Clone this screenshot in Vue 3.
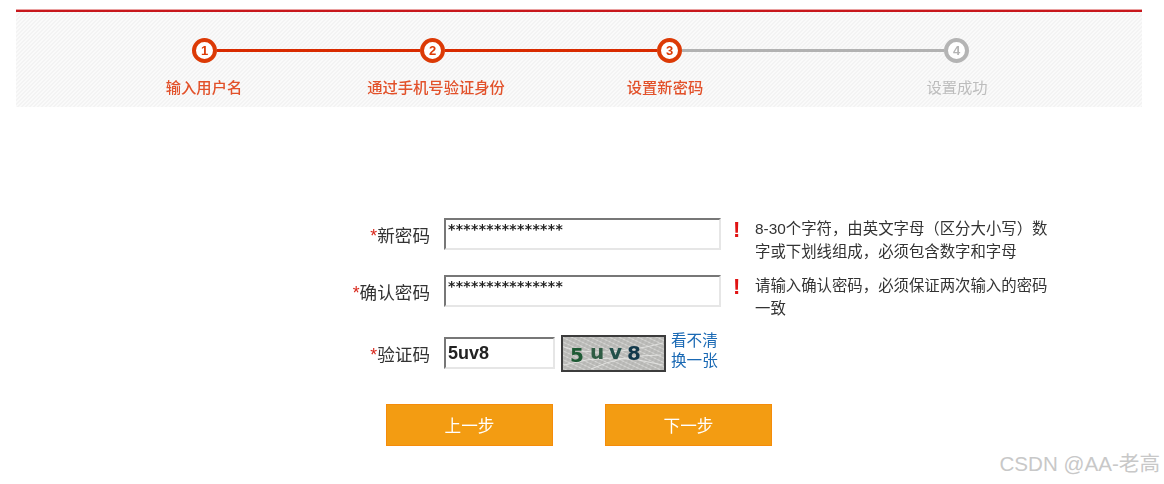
<script setup>
const steps = [
  { n: 1, label: '输入用户名', on: true },
  { n: 2, label: '通过手机号验证身份', on: true },
  { n: 3, label: '设置新密码', on: true },
  { n: 4, label: '设置成功', on: false },
]
const masked = '***************'
</script>

<template>
  <div class="page">
    <div class="main">
      <section class="band">
        <div class="track">
          <template v-for="(s, i) in steps" :key="s.n">
            <span class="dot" :class="{ off: !s.on }">{{ s.n }}</span>
            <span v-if="i < 3" class="line" :class="['l' + i, { off: !steps[i + 1].on }]"></span>
          </template>
        </div>
        <div class="labels">
          <span v-for="s in steps" :key="s.n" :class="{ off: !s.on }">{{ s.label }}</span>
        </div>
      </section>

      <form class="form" @submit.prevent>
        <div class="row r1">
          <label class="name"><i>*</i>新密码</label>
          <input class="field pwd" readonly :value="masked" />
          <b class="bang">!</b>
          <p class="hint">8-30个字符，由英文字母（区分大小写）数字或下划线组成，必须包含数字和字母</p>
        </div>
        <div class="row r2">
          <label class="name"><i>*</i>确认密码</label>
          <input class="field pwd" readonly :value="masked" />
          <b class="bang">!</b>
          <p class="hint">请输入确认密码，必须保证两次输入的密码一致</p>
        </div>
        <div class="row r3">
          <label class="name"><i>*</i>验证码</label>
          <input class="field code" readonly value="5uv8" />
          <svg class="captcha" width="105" height="37" viewBox="0 0 105 37">
            <defs>
              <pattern id="noise" width="4" height="4" patternUnits="userSpaceOnUse" patternTransform="rotate(25)">
                <rect width="4" height="4" fill="#bcbcba" />
                <path d="M0 1.5H4" stroke="#d8d8d6" stroke-width="1" />
                <path d="M1 0V4" stroke="#a2a2a0" stroke-width=".5" />
              </pattern>
            </defs>
            <rect x="1" y="1" width="103" height="35" fill="url(#noise)" stroke="#3c3c3c" stroke-width="2" />
            <path d="M3 30Q50 16 102 30M3 12Q40 24 102 8M30 34Q60 20 100 20" fill="none" stroke="#e2e2e0" stroke-width="1" />
            <text x="9" y="27" class="cap" fill="#1d5a34">5</text>
            <text x="29" y="24" class="cap" fill="#2f5c44">u</text>
            <text x="48" y="24" class="cap" fill="#22504a">v</text>
            <text x="66" y="25" class="cap" fill="#12384a">8</text>
          </svg>
          <div class="links"><a>看不清</a><a>换一张</a></div>
        </div>
        <div class="actions">
          <button type="button" class="btn">上一步</button>
          <button type="button" class="btn">下一步</button>
        </div>
      </form>
    </div>
    <div class="mark">CSDN @AA-老高</div>
  </div>
</template>

<style>
html, body { margin: 0; background: #fff; }
</style>

<style scoped>
.page {
  position: relative;
  width: 1164px;
  height: 484px;
  overflow: hidden;
  background: #fff;
  font-family: "Liberation Sans", "Noto Sans CJK SC", sans-serif;
}
.main {
  padding-top: 10px;
  filter: blur(0.45px);
}
.band {
  width: 1126px;
  height: 97px;
  margin-left: 16px;
  box-sizing: border-box;
  border-top: 2px solid #c8171c;
  box-shadow: 0 -1px 0 #e9a0a0;
  background: repeating-linear-gradient(135deg, #f3f3f3 0 1.414px, #fafafa 1.414px 2.828px);
}
.track {
  display: flex;
  align-items: center;
  padding: 26px 0 0 176px;
}
.dot {
  width: 25px;
  height: 25px;
  box-sizing: border-box;
  flex: none;
  border: 4px solid #dc3a06;
  border-radius: 50%;
  background: #fff;
  color: #dc3a06;
  font: bold 13px/17px "Liberation Sans", sans-serif;
  text-align: center;
}
.dot.off {
  border-color: #b4b4b4;
  color: #b4b4b4;
}
.line {
  height: 3px;
  background: #d92b00;
}
.line.off { background: #b2b2b2; }
.l0 { width: 203px; }
.l1 { width: 212px; }
.l2 { width: 262px; }
.labels {
  display: grid;
  grid-template-columns: 232px 232px 226px 358px;
  padding: 14px 0 0 72px;
  font-size: 15.3px;
  font-weight: 500;
  line-height: 22px;
  text-align: center;
  color: #e2512a;
}
.labels .off { color: #bdbdbd; font-weight: 400; }

.form {
  margin-top: 111px;
  color: #333;
}
.row {
  display: flex;
  align-items: flex-start;
}
.r1 { height: 44px; margin-bottom: 13px; }
.r2 { height: 44px; margin-bottom: 16px; }
.r3 { height: 37px; }
.name {
  width: 430px;
  flex: none;
  margin-right: 14px;
  text-align: right;
  font-size: 17.6px;
  line-height: 36px;
}
.r3 .name { line-height: 40px; }
.name i {
  font-style: normal;
  color: #d8261a;
}
.field {
  box-sizing: border-box;
  flex: none;
  margin: 0;
  outline: none;
  background: #fff;
  border-style: solid;
  border-width: 2px;
  border-color: #777 #e6e6e6 #e6e6e6 #777;
  color: #222;
  font-family: "DejaVu Sans", sans-serif;
  font-weight: bold;
}
.pwd {
  width: 277px;
  height: 32px;
  padding: 0 0 11px 2px;
  font-size: 14px;
  letter-spacing: 0.35px;
}
.code {
  width: 111px;
  height: 32px;
  margin-top: 2px;
  padding: 0 0 0 2px;
  font-family: "Liberation Sans", sans-serif;
  font-size: 18px;
}
.bang {
  width: 25px;
  box-sizing: border-box;
  margin: -1px 3px 0 6px;
  padding-left: 6px;
  color: #e01313;
  font: bold 22px/26px "Liberation Sans", sans-serif;
}
.hint {
  width: 300px;
  margin: -1px 0 0;
  font-size: 15.4px;
  line-height: 23px;
  color: #333;
}
.captcha {
  flex: none;
  margin-left: 6px;
}
.cap {
  font: bold 20px "DejaVu Sans", sans-serif;
}
.links {
  display: flex;
  flex-direction: column;
  margin: -4px 0 0 5px;
  font-size: 15.6px;
  line-height: 20px;
  color: #1a69b4;
}
.actions {
  display: flex;
  gap: 52px;
  margin: 32px 0 0 386px;
}
.btn {
  width: 167px;
  height: 42px;
  padding: 0;
  border: 1px solid #f58c0a;
  background: #f39c12;
  color: #fff;
  font-family: inherit;
  font-size: 16.6px;
}
.mark {
  position: absolute;
  right: 4px;
  bottom: 6px;
  font-size: 20.6px;
  line-height: 28px;
  color: #c8c8c8;
}
</style>
